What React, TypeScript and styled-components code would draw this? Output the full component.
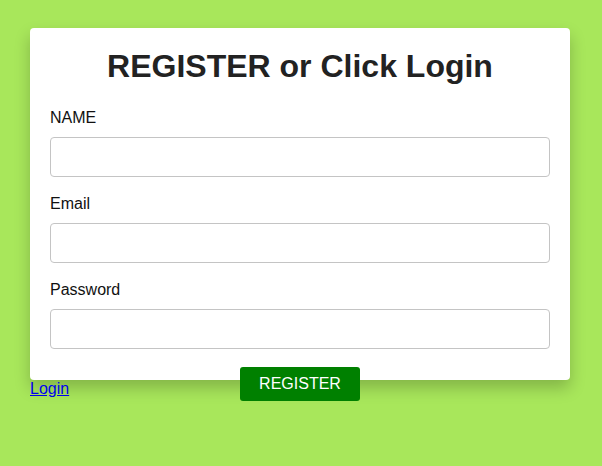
import React from "react";
import styled, { createGlobalStyle } from "styled-components";

const Global = createGlobalStyle`
  html, body { margin: 0; padding: 0; }
  body {
    background: #a8e75b;
    font-family: "Liberation Sans", Arial, sans-serif;
    min-height: 466px;
  }
`;

const Page = styled.div`
  padding: 28px 30px;
`;

const Card = styled.form`
  box-sizing: border-box;
  width: 540px;
  height: 352px;
  padding: 20px;
  background: #fff;
  border-radius: 4px;
  box-shadow: 0 8px 16px rgba(0, 0, 0, 0.22);
  display: flex;
  flex-direction: column;
`;

const Title = styled.h1`
  margin: 0 0 24px;
  font-size: 32px;
  line-height: 37px;
  font-weight: bold;
  text-align: center;
  color: #222;
`;

const Field = styled.div`
  display: flex;
  flex-direction: column;
  gap: 10px;
  margin-bottom: 18px;
`;

const Label = styled.label`
  font-size: 16px;
  line-height: 18px;
  color: #111;
`;

const Input = styled.input`
  box-sizing: border-box;
  width: 100%;
  height: 40px;
  border: 1px solid #c4c4c4;
  border-radius: 4px;
  padding: 0 10px;
  font-size: 16px;
  font-family: inherit;
  outline: none;
`;

const Button = styled.button`
  align-self: center;
  width: 120px;
  height: 34px;
  flex-shrink: 0;
  border: none;
  border-radius: 3px;
  background: #008000;
  color: #fff;
  font-size: 16px;
  font-family: inherit;
`;

const LoginLink = styled.a`
  display: inline-block;
  font-size: 16px;
  line-height: 18px;
  color: #0000ee;
  text-decoration: underline;
`;

export default function App() {
  return (
    <Page>
      <Global />
      <Card onSubmit={(e) => e.preventDefault()}>
        <Title>REGISTER or Click Login</Title>
        <Field>
          <Label>NAME</Label>
          <Input type="text" />
        </Field>
        <Field>
          <Label>Email</Label>
          <Input type="email" />
        </Field>
        <Field>
          <Label>Password</Label>
          <Input type="password" />
        </Field>
        <Button type="submit">REGISTER</Button>
      </Card>
      <LoginLink href="#">Login</LoginLink>
    </Page>
  );
}
